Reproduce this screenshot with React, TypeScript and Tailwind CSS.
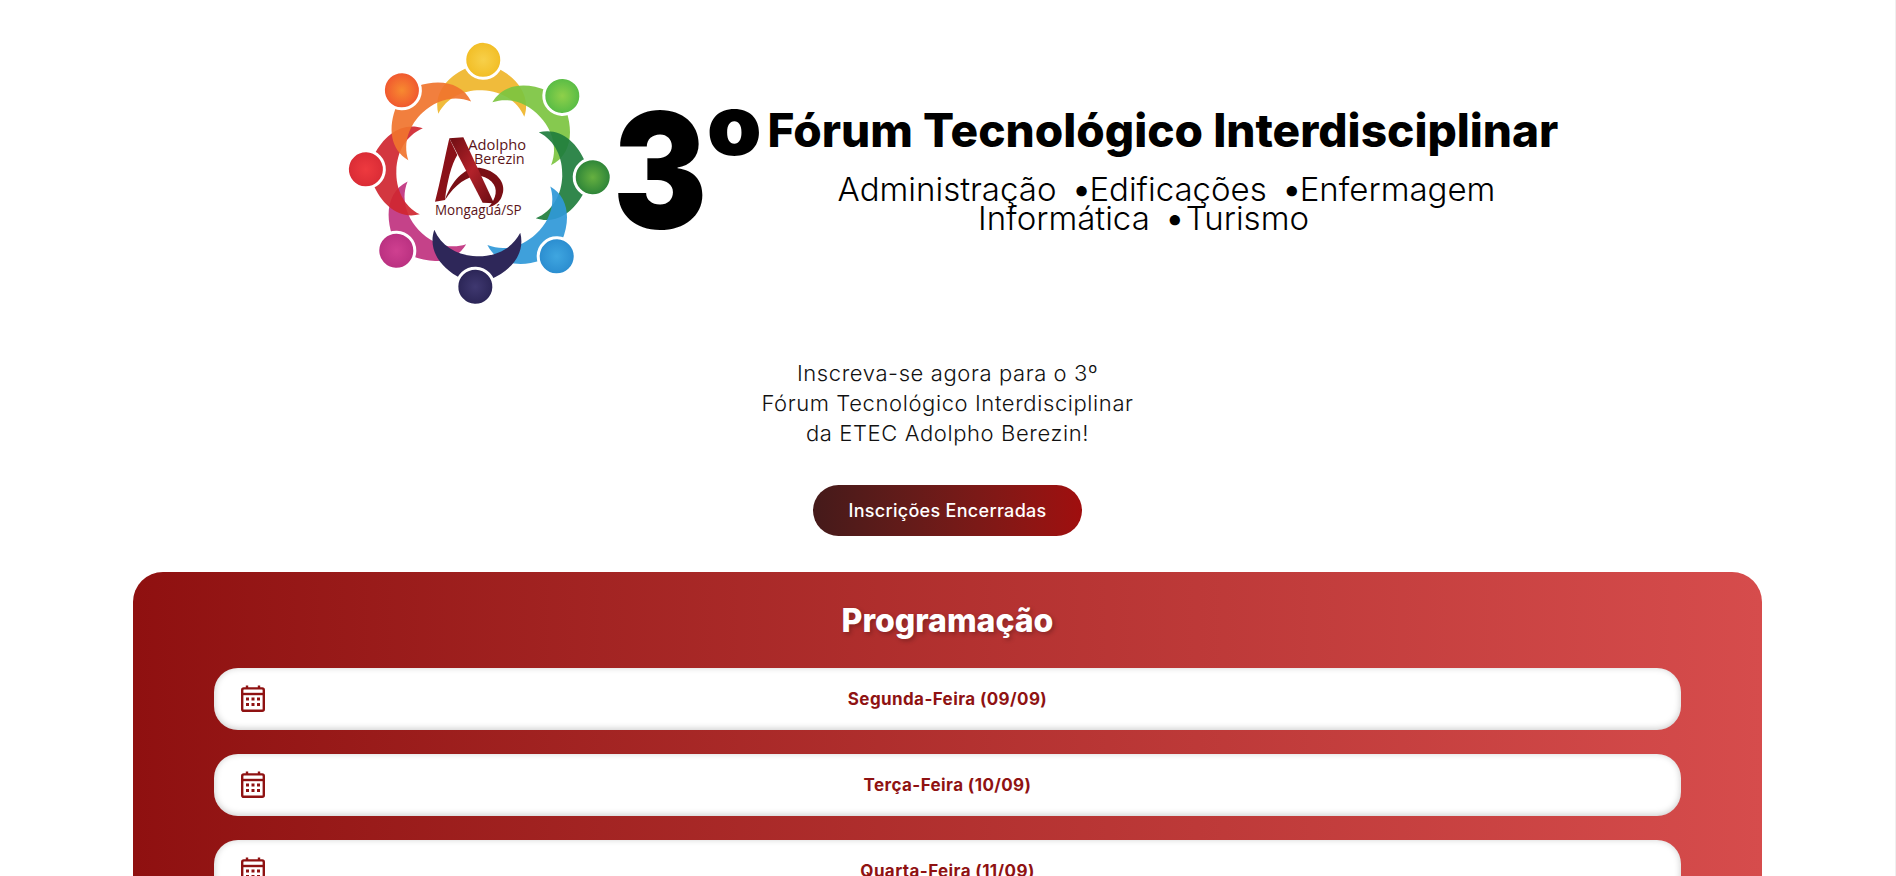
const people = [
  { a: 2, arm: '#efb52a', head: '#f2bd24', light: '#f7d04a' },
  { a: 47, arm: '#7cc440', head: '#55bb45', light: '#8fd04a' },
  { a: 92, arm: '#1f7d3d', head: '#2a8238', light: '#66b040' },
  { a: 137, arm: '#2f98d8', head: '#2a8ccf', light: '#3fa6e0' },
  { a: 227, arm: '#c0327f', head: '#b93080', light: '#cf4090' },
  { a: 272, arm: '#cf2630', head: '#d92b35', light: '#ee3a3f' },
  { a: 317, arm: '#f0742e', head: '#f0552f', light: '#f78a30' },
  { a: 182, arm: '#2e2759', head: '#2a2455', light: '#3f3870' },
];

const ARM = 'M-43 -58 C-49 -78 -36 -96 -14 -106 L14 -106 C36 -96 49 -78 43 -58 C35 -75 18 -83 0 -83 C-18 -83 -35 -75 -43 -58Z';

function Logo() {
  return (
    <svg viewBox="0 0 300 290" className="w-[300px] h-[290px] shrink-0">
      <defs>
        {people.map((p) => (
          <radialGradient key={p.a} id={`h${p.a}`}>
            <stop offset="0" stopColor={p.light} />
            <stop offset="1" stopColor={p.head} />
          </radialGradient>
        ))}
        <linearGradient id="rib" x1="0" y1="0" x2="1" y2="1">
          <stop offset="0" stopColor="#6e0d12" />
          <stop offset="0.5" stopColor="#b3222a" />
          <stop offset="1" stopColor="#6a0c12" />
        </linearGradient>
      </defs>
      <g transform="translate(149.3 143.3)">
        {people.map((p) => (
          <path key={p.a} d={ARM} fill={p.arm} fillOpacity={p.a === 182 ? 1 : 0.92} transform={`rotate(${p.a})`} />
        ))}
        {people.map((p) => (
          <g key={p.a} transform={`rotate(${p.a})`}>
            <circle cx="0" cy="-113.5" r="18.5" fill={`url(#h${p.a})`} stroke="#fff" strokeWidth="3" />
          </g>
        ))}
      </g>
      <g transform="translate(90 90) scale(0.3333)">
        <path d="M88 55 C75 110 60 190 45 245 L75 240 C80 190 95 130 112 105Z" fill="#8a1118" />
        <path d="M75 240 C95 180 140 135 185 145 C235 155 262 195 245 230 C238 248 222 258 205 262 C230 235 235 205 215 185 C180 150 120 170 75 240Z" fill="#7a0f15" />
        <path d="M88 55 L130 52 L222 250 L188 248Z" fill="url(#rib)" />
      </g>
      <g fontFamily="'Open Sans','Noto Sans',sans-serif" fill="#5b1418" fontSize="14" fontWeight="500">
        <text x="138.3" y="120" textLength="57.7" lengthAdjust="spacingAndGlyphs">Adolpho</text>
        <text x="144" y="134.3" textLength="50.7" lengthAdjust="spacingAndGlyphs">Berezin</text>
        <text x="105" y="185" textLength="86.7" lengthAdjust="spacingAndGlyphs">Mongaguá/SP</text>
      </g>
    </svg>
  );
}

function Row({ label }: { label: string }) {
  return (
    <div className="relative h-[62px] rounded-[24px] bg-white shadow-[inset_0_-1px_7px_rgba(0,0,0,0.22)] flex items-center justify-center">
      <svg viewBox="0 0 24 27" className="absolute left-[27px] top-[17px] w-[24px] h-[27px]" fill="none" stroke="#8f1212" strokeWidth="2.4">
        <rect x="1.2" y="3.4" width="21.6" height="22.4" rx="1.6" />
        <path d="M1.2 9h21.6" />
        <path d="M6 0.5v3M18 0.5v3" />
        <g fill="#8f1212" stroke="none">
          <rect x="5" y="12.5" width="3" height="3" />
          <rect x="10.5" y="12.5" width="3" height="3" />
          <rect x="16" y="12.5" width="3" height="3" />
          <rect x="5" y="18" width="3" height="3" />
          <rect x="10.5" y="18" width="3" height="3" />
          <rect x="16" y="18" width="3" height="3" />
        </g>
      </svg>
      <span className="pt-[2px] text-[17px] tracking-[0.4px] font-bold text-[#8f1212]">{label}</span>
    </div>
  );
}

export default function App() {
  return (
    <div className="h-screen overflow-hidden bg-white font-['Inter',sans-serif] border-r border-[#efefef]">
      <div className="flex justify-center pl-[24px] pt-[30px] h-[320px]">
        <div className="flex items-start">
          <Logo />
          <div className="relative w-[960px] h-[280px]">
            <div className="absolute left-[-17px] top-[60px] origin-left scale-x-[0.88] text-[160px] leading-none font-black text-black">3</div>
            <div className="absolute left-[77px] top-[53px] origin-left scale-x-[1.04] text-[84px] leading-none font-black text-black">o</div>
            <div className="absolute left-[138px] top-[77px] whitespace-nowrap text-[46px] font-extrabold leading-none text-black">Fórum Tecnológico Interdisciplinar</div>
            <div className="absolute left-[166px] top-[145px] w-[720px] text-center text-[33px] font-light leading-[29px] text-black">
              <div className="pl-[22px]">Administração <span className="font-bold ml-[8px]">•</span>Edificações <span className="font-bold ml-[8px]">•</span>Enfermagem</div>
              <div className="pr-[24px]">Informática <span className="font-bold ml-[8px] mr-[3px]">•</span>Turismo</div>
            </div>
          </div>
        </div>
      </div>
      <div className="flex flex-col items-center">
        <p className="mt-[38px] text-center text-[22px] tracking-[0.6px] leading-[30px] font-light text-[#111]">
          Inscreva-se agora para o 3º
          <br />
          Fórum Tecnológico Interdisciplinar
          <br />
          da ETEC Adolpho Berezin!
        </p>
        <div className="mt-[37px] w-[269px] h-[51px] rounded-full flex items-center justify-center text-[18px] tracking-[0.3px] font-medium text-white bg-gradient-to-r from-[#451a1a] to-[#a00e0e]">
          Inscrições Encerradas
        </div>
      </div>
      <div className="mx-[133px] mt-[36px] rounded-[30px] bg-gradient-to-r from-[#8f1010] to-[#d64c4c] px-[81px] pb-10 pt-[26px]">
        <h2 className="text-center text-[32px] font-extrabold leading-[46px] text-white [text-shadow:2px_2px_4px_rgba(0,0,0,0.25)] mb-[24px]">Programação</h2>
        <div className="flex flex-col gap-[24px]">
          <Row label="Segunda-Feira (09/09)" />
          <Row label="Terça-Feira (10/09)" />
          <Row label="Quarta-Feira (11/09)" />
        </div>
      </div>
    </div>
  );
}
